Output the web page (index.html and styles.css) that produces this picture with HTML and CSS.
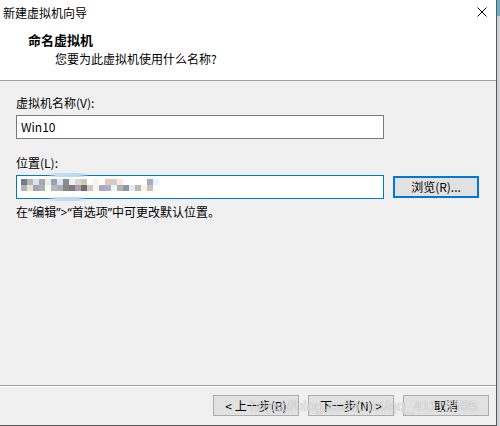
FILE: index.html
```html
<!DOCTYPE html>
<html>
<head>
	<meta charset="utf-8">
	<title>新建虚拟机向导</title>
	<link rel="stylesheet" href="styles.css">
</head>
<body>
	<div class="window">
		<div class="titlebar">
			<span class="caption">新建虚拟机向导</span>
			<svg class="close" width="10" height="10" viewBox="0 0 10 10">
				<path d="M0.5 0.5 L9.5 9.5 M9.5 0.5 L0.5 9.5" stroke="#000" stroke-width="1" fill="none"/>
			</svg>
		</div>

		<div class="header">
			<div class="headTitle">命名虚拟机</div>
			<div class="headSub">您要为此虚拟机使用什么名称?</div>
		</div>

		<div class="content">
			<div class="label">虚拟机名称(V):</div>
			<div class="field">Win10</div>

			<div class="label second">位置(L):</div>
			<div class="row">
				<div class="field focused">
					<div class="blot blotTop"></div>
					<div class="mosaic rowA"></div>
					<div class="mosaic rowB"></div>
					<div class="blot blotBottom"></div>
				</div>
				<div class="button browse">浏览(R)...</div>
			</div>

			<div class="hint">在“编辑”&gt;“首选项”中可更改默认位置。</div>
		</div>

		<div class="footer">
			<div class="button">&lt; 上一步(B)</div>
			<div class="button">下一步(N) &gt;</div>
			<div class="button">取消</div>
			<div class="watermark">https://blog.csdn.net/qq_41115595</div>
		</div>
	</div>
</body>
</html>
```

FILE: styles.css
```css
:root {
	--face: #f0f0f0;
	--line: #a0a0a0;
	--accent: #0078d7;
	--btn: #e1e1e1;
	--btnBorder: #adadad;
}

body {
	margin: 0;
	width: 500px;
	height: 426px;
	overflow: hidden;
	background: linear-gradient(to bottom, #6aaecb 0 16px, #cfd3d6 16px);
	font-family: "Noto Sans CJK SC", "Noto Sans", sans-serif;
	font-size: 12px;
	color: #000;
}

.window {
	width: 496px;
	height: 425px;
	border-bottom: 1px solid #5a5a5a;
	border-right: 1px solid #5a5a5a;
	background-color: var(--face);
	display: flex;
	flex-direction: column;
}

.titlebar {
	height: 25px;
	background-color: #fff;
	display: flex;
	align-items: center;
	justify-content: space-between;
	padding: 0 9px 0 3px;
	line-height: 25px;
}

.close {
	display: block;
	margin-top: -1px;
}

.header {
	height: 48px;
	background-color: #fff;
	border-bottom: 1px solid var(--line);
	padding-top: 7px;
}

.headTitle {
	padding-left: 28px;
	font-weight: bold;
	font-size: 13px;
	line-height: 16px;
}

.headSub {
	padding-left: 55px;
	margin-top: 3px;
	line-height: 16px;
}

.content {
	flex: 1;
	padding: 14px 0 0 16px;
}

.label {
	line-height: 16px;
	margin-bottom: 4px;
}

.label.second {
	margin-top: 16px;
}

.field {
	box-sizing: border-box;
	width: 368px;
	height: 24px;
	border: 1px solid #7a7a7a;
	background-color: #fff;
	padding-left: 4px;
	line-height: 22px;
	position: relative;
}

.field.focused {
	border-color: var(--accent);
	padding-top: 3px;
}

.mosaic {
	height: 6px;
}

.rowA {
	width: 138px;
	background: linear-gradient(to right,
		#787890 0 6px, #b4b4bc 6px 12px, #cfe3f3 12px 18px, #a8a8a8 18px 24px,
		#f2e8e4 24px 30px, #8ea4bc 30px 36px, #dde6ee 36px 42px, #8c8c98 42px 48px,
		#f0f0f0 48px 54px, #d8d8d0 54px 60px, #c8c8bc 60px 66px, #fff 66px 72px,
		#f4f4f4 72px 78px, #fff 78px 84px, #e8c8b8 84px 90px, #cccccc 90px 96px,
		#f8e8d8 96px 102px, #fff 102px 126px, #a8a8c8 126px 132px, #e0f8ff 132px 138px);
}

.rowB {
	width: 132px;
	background: linear-gradient(to right,
		#a8b4c4 0 6px, #f0e0cc 6px 12px, #a4a4a4 12px 18px, #a8b0b8 18px 24px,
		#f0fff0 24px 30px, #b8b8b8 30px 36px, #a8b0b8 36px 42px, #888880 42px 48px,
		#807888 48px 54px, #b09ca8 54px 60px, #786868 60px 66px, #c8c8c8 66px 72px,
		#f8f8e0 72px 78px, #a8a8c8 78px 84px, #b0b0c0 84px 90px, #e8f8f8 90px 96px,
		#b8b0b0 96px 102px, #8898a8 102px 108px, #e8e8e8 108px 114px, #b8b8c0 114px 120px,
		#fff0d8 120px 126px, #c8c0c0 126px 132px);
}

.blot {
	position: absolute;
	height: 4px;
	background: linear-gradient(to right, transparent, #c2ddf4 25%, #b9d8f2 75%, transparent);
}

.blotTop {
	left: 30px;
	top: -3px;
	width: 42px;
}

.blotBottom {
	left: 30px;
	bottom: -3px;
	width: 40px;
}

.row {
	display: flex;
	align-items: center;
	gap: 9px;
}

.button {
	box-sizing: border-box;
	width: 86px;
	height: 21px;
	border: 1px solid var(--btnBorder);
	background-color: var(--btn);
	text-align: center;
	line-height: 19px;
}

.button.browse {
	height: 22px;
	border: 2px solid var(--accent);
	line-height: 18px;
}

.hint {
	margin-top: 6px;
	line-height: 16px;
	font-family: "Noto Sans", "Noto Sans CJK SC", sans-serif;
}

.footer {
	box-sizing: border-box;
	height: 40px;
	border-top: 1px solid var(--line);
	box-shadow: inset 0 1px #fff;
	padding: 9px 7px 0 0;
	display: flex;
	justify-content: flex-end;
	align-items: flex-start;
	gap: 9px;
	position: relative;
}

.watermark {
	position: absolute;
	left: 250px;
	top: 11px;
	font-family: "Liberation Sans", Arial, sans-serif;
	font-size: 15px;
	line-height: 18px;
	color: rgba(255, 255, 255, 0.7);
	text-shadow: 0 0 1px rgba(0, 0, 0, 0.35);
	white-space: nowrap;
	pointer-events: none;
}
```
